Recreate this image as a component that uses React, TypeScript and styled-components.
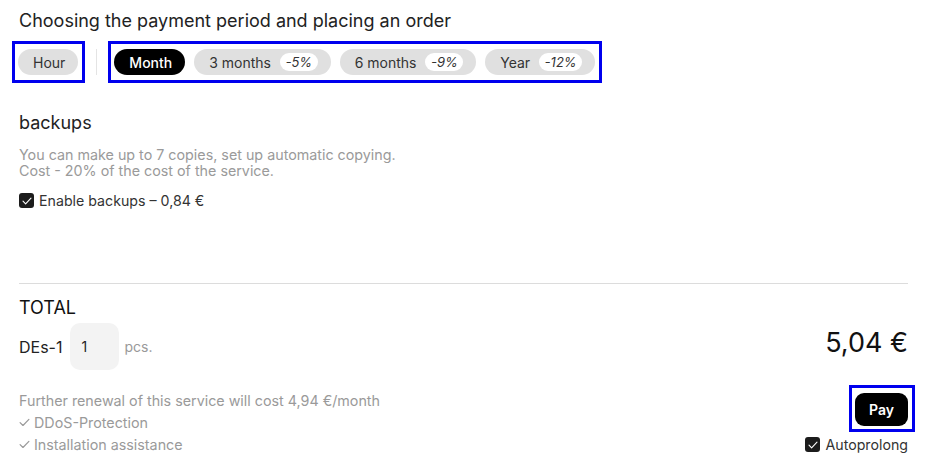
import React from "react";
import styled, { createGlobalStyle } from "styled-components";

const GlobalStyle = createGlobalStyle`
  html, body {
    margin: 0;
    padding: 0;
    background: #ffffff;
    font-family: Inter, "Noto Sans", sans-serif;
    color: #222;
  }
`;

const Page = styled.div`
  width: 927px;
  height: 464px;
  box-sizing: border-box;
  padding: 10px 19px 0 19px;
  display: flex;
  flex-direction: column;
  overflow: hidden;
`;

const Heading = styled.h2`
  margin: 0;
  font-size: 18px;
  font-weight: 400;
  line-height: 22px;
  color: #222;
`;

const PeriodRow = styled.div`
  display: flex;
  align-items: center;
  margin: 9px 0 0 -7px;
`;

const Highlight = styled.div`
  display: flex;
  align-items: center;
  gap: 9px;
  border: 3px solid #0000ee;
  padding: 5px 4px 5px 3px;
`;

const Separator = styled.div`
  width: 1px;
  height: 26px;
  background: #e4e4e4;
  margin: 0 11px 0 11px;
`;

const Pill = styled.button<{ $active?: boolean }>`
  display: flex;
  align-items: center;
  gap: 9px;
  height: 26px;
  padding: 0 13px 0 15px;
  border: none;
  border-radius: 13px;
  font-family: inherit;
  font-size: 14px;
  font-weight: ${(p) => (p.$active ? 500 : 400)};
  background: ${(p) => (p.$active ? "#000" : "#e0e0e0")};
  color: ${(p) => (p.$active ? "#fff" : "#333")};
  cursor: pointer;
`;

const Discount = styled.span`
  background: #fff;
  border-radius: 9px;
  padding: 1px 5.5px;
  font-size: 13px;
  font-style: italic;
  color: #333;
`;

const Section = styled.div`
  margin-top: 29px;
  display: flex;
  flex-direction: column;
`;

const Description = styled.p`
  margin: 13px 0 0;
  font-size: 14.3px;
  line-height: 15.5px;
  color: #9a9a9a;
`;

const CheckLabel = styled.label<{ $offset?: number }>`
  display: flex;
  align-items: center;
  gap: 5px;
  font-size: 14.2px;
  color: #333;
  margin-top: ${(p) => p.$offset ?? 0}px;
`;

const Box = styled.span`
  width: 15px;
  height: 15px;
  border-radius: 3px;
  background: #1c1c1c;
  display: flex;
  align-items: center;
  justify-content: center;
`;

const Divider = styled.hr`
  border: none;
  height: 1px;
  background: #dcdcdc;
  margin: 74px 0 0;
`;

const Total = styled.div`
  margin-top: 13px;
  display: flex;
  flex-direction: column;
`;

const TotalTitle = styled.div`
  font-size: 18px;
  line-height: 22px;
  color: #111;
`;

const ItemRow = styled.div`
  display: flex;
  align-items: center;
  margin-top: 4px;
`;

const ItemName = styled.span`
  font-size: 16px;
  color: #222;
  margin-right: 8px;
`;

const Qty = styled.div`
  width: 49px;
  height: 47px;
  box-sizing: border-box;
  border-radius: 10px;
  background: #f3f3f3;
  padding-left: 11px;
  display: flex;
  align-items: center;
  font-size: 14px;
  color: #222;
`;

const Unit = styled.span`
  font-size: 14px;
  color: #999;
  margin-left: 5px;
`;

const Price = styled.span`
  margin-left: auto;
  font-size: 27px;
  color: #111;
  margin-top: -8px;
`;

const Footer = styled.div`
  display: flex;
  justify-content: space-between;
  align-items: flex-end;
  margin-top: 15px;
`;

const Features = styled.div`
  display: flex;
  flex-direction: column;
  gap: 5px;
  font-size: 14.3px;
  color: #9a9a9a;
`;

const Feature = styled.div`
  display: flex;
  align-items: center;
  gap: 4px;
`;

const Actions = styled.div`
  display: flex;
  flex-direction: column;
  align-items: flex-end;
  gap: 4px;
`;

const PayFrame = styled.div`
  border: 3px solid #0000ee;
  padding: 5px 4px 3px 3px;
  margin-right: -7px;
`;

const PayButton = styled.button`
  height: 33px;
  padding: 0 14px;
  border: none;
  border-radius: 9px;
  background: #000;
  color: #fff;
  font-family: inherit;
  font-size: 14px;
  font-weight: 600;
  cursor: pointer;
`;

const Check = ({ color = "#fff", size = 10 }) => (
  <svg width={size} height={size * 0.8} viewBox="0 0 10 8" fill="none">
    <polyline points="1,4.2 3.6,6.8 9,1.2" stroke={color} strokeWidth="1.1" strokeLinecap="round" strokeLinejoin="round" />
  </svg>
);

const periods = [
  { label: "3 months", discount: "-5%" },
  { label: "6 months", discount: "-9%" },
  { label: "Year", discount: "-12%" },
];

export default function App() {
  return (
    <Page>
      <GlobalStyle />
      <Heading>Choosing the payment period and placing an order</Heading>
      <PeriodRow>
        <Highlight>
          <Pill>Hour</Pill>
        </Highlight>
        <Separator />
        <Highlight>
          <Pill $active>Month</Pill>
          {periods.map((p) => (
            <Pill key={p.label}>
              {p.label}
              <Discount>{p.discount}</Discount>
            </Pill>
          ))}
        </Highlight>
      </PeriodRow>

      <Section>
        <Heading>backups</Heading>
        <Description>
          You can make up to 7 copies, set up automatic copying.
          <br />
          Cost - 20% of the cost of the service.
        </Description>
        <CheckLabel $offset={14}>
          <Box>
            <Check />
          </Box>
          Enable backups – 0,84 €
        </CheckLabel>
      </Section>

      <Divider />

      <Total>
        <TotalTitle>TOTAL</TotalTitle>
        <ItemRow>
          <ItemName>DEs-1</ItemName>
          <Qty>1</Qty>
          <Unit>pcs.</Unit>
          <Price>5,04 €</Price>
        </ItemRow>
        <Footer>
          <Features>
            <span>Further renewal of this service will cost 4,94 €/month</span>
            <Feature>
              <Check color="#9a9a9a" size={11} />
              DDoS-Protection
            </Feature>
            <Feature>
              <Check color="#9a9a9a" size={11} />
              Installation assistance
            </Feature>
          </Features>
          <Actions>
            <PayFrame>
              <PayButton>Pay</PayButton>
            </PayFrame>
            <CheckLabel>
              <Box>
                <Check />
              </Box>
              Autoprolong
            </CheckLabel>
          </Actions>
        </Footer>
      </Total>
    </Page>
  );
}
